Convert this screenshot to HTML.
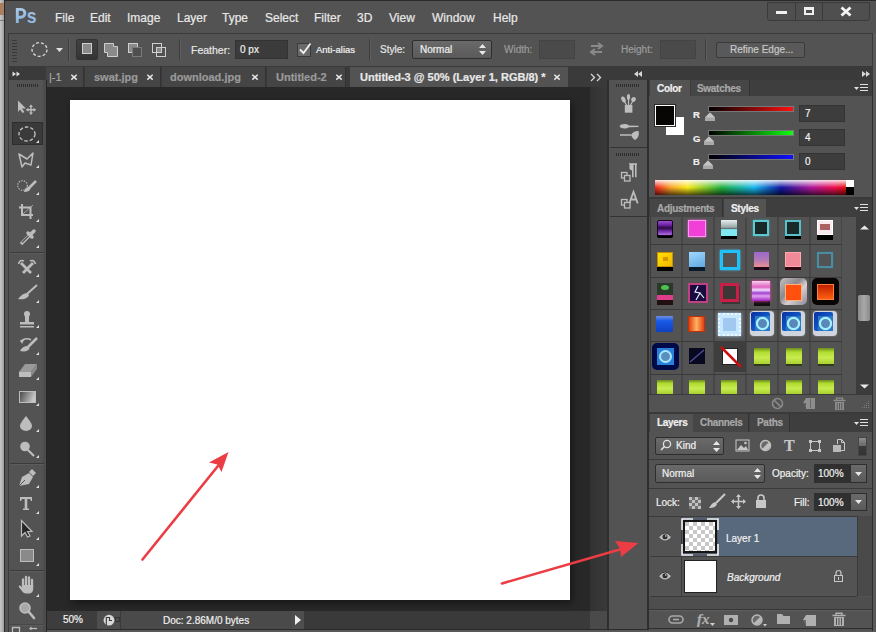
<!DOCTYPE html>
<html><head><meta charset="utf-8">
<style>
*{margin:0;padding:0;box-sizing:border-box}
html,body{width:876px;height:632px;overflow:hidden;background:#535353}
body{position:relative;font-family:"Liberation Sans",sans-serif;color:#e8e8e8}
.a{position:absolute}
.t{position:absolute;white-space:nowrap;line-height:1;-webkit-text-stroke:0.2px currentColor}
</style></head><body>
<!-- left light strip -->
<div class="a" style="left:0;top:0;width:4px;height:632px;background:linear-gradient(90deg,#c8c8c8,#a0a0a0)"></div><div class="a" style="left:0;top:3px;width:4px;height:12px;background:#a88060"></div><div class="a" style="left:0;top:20px;width:4px;height:1px;background:#7a7a7a"></div>
<div class="a" style="left:4px;top:0;width:872px;height:632px;background:#535353;border-left:1px solid #2a2a2a;border-top:1px solid #2a2a2a"></div>

<!-- MENU BAR -->
<svg class="a" style="left:0;top:0" width="44" height="30"><defs><linearGradient id="psg" x1="0" y1="0" x2="0" y2="1"><stop offset="0" stop-color="#a8c8e8"/><stop offset="1" stop-color="#8ab2dc"/></linearGradient></defs>
<path d="M17.3 23V9.4H21A3.9 3.9 0 0 1 21 17.2H17.3" fill="none" stroke="url(#psg)" stroke-width="2.9"/>
<text x="0" y="0" transform="translate(26.8 23) scale(0.88 1.04)" font-family="Liberation Sans" font-weight="bold" font-size="20" fill="url(#psg)">s</text></svg>
<div class="t menu" style="left:55px;top:12px;font-size:12px">File</div>
<div class="t menu" style="left:90px;top:12px;font-size:12px">Edit</div>
<div class="t menu" style="left:127px;top:12px;font-size:12px">Image</div>
<div class="t menu" style="left:177px;top:12px;font-size:12px">Layer</div>
<div class="t menu" style="left:222px;top:12px;font-size:12px">Type</div>
<div class="t menu" style="left:265px;top:12px;font-size:12px">Select</div>
<div class="t menu" style="left:314px;top:12px;font-size:12px">Filter</div>
<div class="t menu" style="left:357px;top:12px;font-size:12px">3D</div>
<div class="t menu" style="left:389px;top:12px;font-size:12px">View</div>
<div class="t menu" style="left:432px;top:12px;font-size:12px">Window</div>
<div class="t menu" style="left:493px;top:12px;font-size:12px">Help</div>

<!-- window controls -->
<div class="a" style="left:767px;top:2px;width:103px;height:19px;background:#4f4f4f;border:1px solid #3a3a3a;border-radius:0 0 3px 3px"></div>
<div class="a" style="left:795px;top:2px;width:1px;height:19px;background:#3a3a3a"></div>
<div class="a" style="left:822px;top:2px;width:1px;height:19px;background:#3a3a3a"></div>
<div class="a" style="left:776px;top:11px;width:11px;height:3px;background:#f0f0f0"></div>
<div class="a" style="left:804px;top:7px;width:10px;height:8px;border:2px solid #f0f0f0;border-top-width:3px"></div>
<svg class="a" style="left:839px;top:6px" width="14" height="11"><path d="M2.5 1.5L11.5 9.5M11.5 1.5L2.5 9.5" stroke="#f4f4f4" stroke-width="2.9"/></svg>

<!-- OPTIONS BAR -->
<div class="a" style="left:8px;top:33px;width:865px;height:34px;background:#535353;border:1px solid #3a3a3a"></div>

<!-- options bar content -->
<div class="a" style="left:12px;top:40px;width:5px;height:22px;background:repeating-linear-gradient(#383838 0 1px,transparent 1px 3px)"></div>
<svg class="a" style="left:30px;top:41px" width="19" height="17"><ellipse cx="9.5" cy="8.5" rx="7.5" ry="6.8" fill="none" stroke="#d8d8d8" stroke-width="1.3" stroke-dasharray="3 2"/></svg>
<svg class="a" style="left:56px;top:48px" width="7" height="5"><path d="M0 0H7L3.5 4Z" fill="#e0e0e0"/></svg>
<div class="a" style="left:68px;top:39px;width:1px;height:22px;background:#3e3e3e"></div>
<div class="a" style="left:69px;top:39px;width:1px;height:22px;background:#5e5e5e"></div>
<div class="a" style="left:76px;top:39px;width:22px;height:21px;background:linear-gradient(#404040,#3a3a3a 70%,#333);border:1px solid #333;border-radius:2px"></div>
<div class="a" style="left:82px;top:43px;width:10px;height:11px;border:1px solid #cfcfcf;background:#8a8a8a"></div>
<svg class="a" style="left:102px;top:41px" width="18" height="17"><path d="M2.5 2.5H11.5V5.5H15.5V15.5H5.5V11.5H2.5Z" fill="#8a8a8a" stroke="#cfcfcf"/></svg>
<svg class="a" style="left:126px;top:41px" width="18" height="17"><rect x="2.5" y="2.5" width="9" height="9" fill="#8a8a8a" stroke="#cfcfcf"/><rect x="6.5" y="6.5" width="9" height="9" fill="#4f4f4f" stroke="#7a7a7a"/></svg>
<svg class="a" style="left:150px;top:41px" width="18" height="17"><rect x="2.5" y="2.5" width="9" height="9" fill="none" stroke="#cfcfcf"/><rect x="6.5" y="6.5" width="9" height="9" fill="none" stroke="#cfcfcf"/><rect x="7" y="7" width="4" height="4" fill="#8a8a8a"/></svg>
<div class="a" style="left:179px;top:39px;width:1px;height:22px;background:#3e3e3e"></div>
<div class="a" style="left:180px;top:39px;width:1px;height:22px;background:#5e5e5e"></div>
<div class="t" style="left:191px;top:45px;font-size:10.5px;color:#e6e6e6">Feather:</div>
<div class="a" style="left:235px;top:40px;width:53px;height:19px;background:#3b3b3b;border:1px solid #333"></div>
<div class="t" style="left:240px;top:45px;font-size:10px;color:#f0f0f0">0 px</div>
<div class="a" style="left:297px;top:43px;width:14px;height:14px;background:#6a6a6a;border:1px solid #3a3a3a"></div>
<svg class="a" style="left:297px;top:40px" width="16" height="16"><path d="M3 9.5L6.5 13L13.5 3.5" fill="none" stroke="#f0f0f0" stroke-width="1.8"/></svg>
<div class="t" style="left:316px;top:45px;font-size:9.5px;color:#f0f0f0">Anti-alias</div>
<div class="a" style="left:369px;top:39px;width:1px;height:22px;background:#3e3e3e"></div>
<div class="a" style="left:370px;top:39px;width:1px;height:22px;background:#5e5e5e"></div>
<div class="t" style="left:380px;top:45px;font-size:10px;color:#e6e6e6">Style:</div>
<div class="a" style="left:412px;top:40px;width:80px;height:19px;background:linear-gradient(#6a6a6a,#5a5a5a);border:1px solid #2e2e2e;border-radius:2px"></div>
<div class="t" style="left:420px;top:45px;font-size:10px;color:#f0f0f0">Normal</div>
<svg class="a" style="left:478px;top:43px" width="9" height="13"><path d="M1 5L4.5 1L8 5ZM1 8L4.5 12L8 8Z" fill="#e8e8e8"/></svg>
<div class="t" style="left:504px;top:45px;font-size:10px;color:#9c9c9c">Width:</div>
<div class="a" style="left:539px;top:40px;width:36px;height:19px;background:#4a4a4a;border:1px solid #444"></div>
<svg class="a" style="left:588px;top:41px" width="17" height="16"><path d="M3 5H13M10 2L14 5L10 8M14 11H4M7 8L3 11L7 14" fill="none" stroke="#8a8a8a" stroke-width="2"/></svg>
<div class="t" style="left:621px;top:45px;font-size:10px;color:#9c9c9c">Height:</div>
<div class="a" style="left:660px;top:40px;width:36px;height:19px;background:#4a4a4a;border:1px solid #444"></div>
<div class="a" style="left:705px;top:39px;width:1px;height:22px;background:#3e3e3e"></div>
<div class="a" style="left:706px;top:39px;width:1px;height:22px;background:#5e5e5e"></div>
<div class="a" style="left:716px;top:42px;width:89px;height:16px;background:#595959;border:1px solid #3a3a3a;border-radius:2px"></div>
<div class="t" style="left:730px;top:45px;font-size:10px;color:#c8c8c8">Refine Edge...</div>

<!-- TAB ROW / DOC AREA -->
<div class="a" style="left:46px;top:67px;width:562px;height:20px;background:#3a3a3a"></div>
<div class="a" style="left:46px;top:87px;width:544px;height:524px;background:#282828"></div>
<div class="a" style="left:590px;top:87px;width:18px;height:524px;background:linear-gradient(90deg,#323232,#3a3a3a)"></div>
<!-- tabs -->
<div class="a" style="left:46px;top:67px;width:38px;height:20px;background:#454545;border-right:1px solid #333"></div>
<div class="t" style="left:49px;top:72px;font-size:11px;color:#a8a8a8">|-1</div>
<svg class="a" style="left:69.5px;top:73px" width="8" height="8"><path d="M1.3 1.8L6.7 6.6M6.7 1.8L1.3 6.6" stroke="#e8e8e8" stroke-width="1.5"/></svg>
<div class="a" style="left:85px;top:67px;width:76px;height:20px;background:#454545;border-right:1px solid #333"></div>
<div class="t" style="left:94px;top:72px;font-size:11px;font-weight:bold;color:#9a9a9a">swat.jpg</div>
<svg class="a" style="left:146px;top:73px" width="8" height="8"><path d="M1.3 1.8L6.7 6.6M6.7 1.8L1.3 6.6" stroke="#e8e8e8" stroke-width="1.5"/></svg>
<div class="a" style="left:162px;top:67px;width:104px;height:20px;background:#454545;border-right:1px solid #333"></div>
<div class="t" style="left:170px;top:72px;font-size:11px;font-weight:bold;color:#9a9a9a">download.jpg</div>
<svg class="a" style="left:251px;top:73px" width="8" height="8"><path d="M1.3 1.8L6.7 6.6M6.7 1.8L1.3 6.6" stroke="#e8e8e8" stroke-width="1.5"/></svg>
<div class="a" style="left:267px;top:67px;width:79px;height:20px;background:#454545;border-right:1px solid #333"></div>
<div class="t" style="left:276px;top:72px;font-size:11px;font-weight:bold;color:#9a9a9a">Untitled-2</div>
<svg class="a" style="left:334.5px;top:73px" width="8" height="8"><path d="M1.3 1.8L6.7 6.6M6.7 1.8L1.3 6.6" stroke="#e8e8e8" stroke-width="1.5"/></svg>
<div class="a" style="left:350px;top:67px;width:218px;height:20px;background:#535353"></div>
<div class="t" style="left:360px;top:72px;font-size:11px;font-weight:bold;color:#e8e8e8">Untitled-3 @ 50% (Layer 1, RGB/8) *</div>
<svg class="a" style="left:552.5px;top:73px" width="8" height="8"><path d="M1.3 1.8L6.7 6.6M6.7 1.8L1.3 6.6" stroke="#e8e8e8" stroke-width="1.5"/></svg>
<svg class="a" style="left:590px;top:73px" width="14" height="9"><path d="M1 1L4.5 4.5L1 8M7 1L10.5 4.5L7 8" fill="none" stroke="#d8d8d8" stroke-width="1.3"/></svg>

<!-- canvas -->
<div class="a" style="left:70px;top:100px;width:500px;height:500px;background:#fff;box-shadow:2px 3px 8px rgba(0,0,0,.45)"></div>

<!-- status bar -->
<div class="a" style="left:46px;top:611px;width:562px;height:18px;background:#3a3a3a"></div>
<div class="a" style="left:46px;top:611px;width:51px;height:18px;background:#3d3d3d"></div>
<div class="t" style="left:63px;top:615px;font-size:10px;color:#f0f0f0">50%</div>
<div class="a" style="left:97px;top:611px;width:24px;height:18px;background:#4e4e4e;border-right:1px solid #3a3a3a"></div>
<svg class="a" style="left:100px;top:612px" width="22" height="16"><circle cx="9" cy="8.2" r="5.4" fill="#d8d8d8"/><path d="M6.3 13V5.5H9.5V8.5H12" fill="none" stroke="#3a3a3a" stroke-width="1.1"/><rect x="15.5" y="5.5" width="4" height="4" fill="none" stroke="#2e2e2e" stroke-width="0.8"/></svg>
<div class="a" style="left:121px;top:611px;width:171px;height:18px;background:#4a4a4a"></div>
<div class="t" style="left:163px;top:616px;font-size:10px;color:#f0f0f0">Doc: 2.86M/0 bytes</div>
<div class="a" style="left:292px;top:611px;width:12px;height:18px;background:#4e4e4e"></div><div class="a" style="left:590px;top:611px;width:17px;height:18px;background:#4a4a4a"></div>
<svg class="a" style="left:294px;top:615px" width="8" height="10"><path d="M1 0V10L7 5Z" fill="#f0f0f0"/></svg>
<div class="a" style="left:47px;top:629px;width:829px;height:1px;background:#2a2a2a"></div>
<div class="a" style="left:47px;top:630px;width:829px;height:2px;background:#585858"></div>

<!-- TOOLBAR -->
<div class="a" style="left:8px;top:67px;width:38px;height:13px;background:#3a3a3a"></div>
<svg class="a" style="left:12px;top:71px" width="10" height="6"><path d="M0.5 0.5L4 3L0.5 5.5ZM4.5 0.5L8 3L4.5 5.5Z" fill="#e0e0e0"/></svg>
<div class="a" style="left:8px;top:80px;width:39px;height:552px;background:#535353;border-left:1px solid #3a3a3a;border-right:1px solid #262626;box-shadow:inset -3px 0 0 #4c4c4c"></div>
<div class="a" style="left:17px;top:84px;width:22px;height:3px;background:repeating-linear-gradient(90deg,#2e2e2e 0 1px,transparent 1px 2px)"></div>

<!-- DOCK ICON COLUMN -->
<div class="a" style="left:608px;top:67px;width:265px;height:13px;background:#3a3a3a"></div>
<svg class="a" style="left:634px;top:71px" width="8" height="6"><path d="M4 0V6L0 3ZM8 0V6L4 3Z" fill="#d8d8d8"/></svg>
<svg class="a" style="left:862px;top:71px" width="8" height="6"><path d="M0 0V6L4 3ZM4 0V6L8 3Z" fill="#d8d8d8"/></svg>
<div class="a" style="left:607px;top:80px;width:42px;height:549px;background:#535353;border-left:2px solid #2e2e2e;border-right:2px solid #2e2e2e"></div>
<div class="a" style="left:610px;top:80px;width:37px;height:68px;background:#535353;border-bottom:1px solid #333"></div>
<div class="a" style="left:610px;top:149px;width:37px;height:68px;background:#535353;border-bottom:1px solid #333"></div>
<div class="a" style="left:616px;top:84px;width:24px;height:3px;background:repeating-linear-gradient(90deg,#2e2e2e 0 1px,transparent 1px 2px)"></div>
<div class="a" style="left:616px;top:153px;width:24px;height:3px;background:repeating-linear-gradient(90deg,#2e2e2e 0 1px,transparent 1px 2px)"></div>

<!-- RIGHT PANELS BG -->
<div class="a" style="left:649px;top:80px;width:224px;height:551px;background:#535353;border-right:1px solid #2e2e2e"></div>
<div class="a" style="left:873px;top:33px;width:3px;height:599px;background:#5a5a5a"></div>

<!-- COLOR PANEL -->
<div class="a" style="left:649px;top:80px;width:223px;height:16px;background:#3e3e3e"></div>
<div class="a" style="left:650px;top:80px;width:40px;height:17px;background:#535353"></div>
<div class="t" style="left:657px;top:84px;font-size:10px;color:#f0f0f0;font-weight:bold;letter-spacing:-0.3px">Color</div>
<div class="a" style="left:691px;top:80px;width:59px;height:16px;background:#464646;border-right:1px solid #333"></div>
<div class="t" style="left:697px;top:84px;font-size:10px;color:#a8a8a8;font-weight:bold;letter-spacing:-0.3px">Swatches</div>
<svg class="a" style="left:854px;top:84px" width="15" height="9"><path d="M0 3H5L2.5 6Z" fill="#e0e0e0"/><path d="M6 0.5H14M6 3.5H14M6 6.5H14" stroke="#e0e0e0" stroke-width="1"/></svg>
<div class="a" style="left:666px;top:117px;width:18px;height:18px;background:#fff"></div>
<div class="a" style="left:655px;top:105px;width:20px;height:21px;background:#080604;border:1px solid #fff;outline:1px solid #2a2a2a"></div>
<div class="t" style="left:693px;top:110px;font-size:9.5px;font-weight:bold;color:#f0f0f0">R</div>
<div class="t" style="left:693px;top:134px;font-size:9.5px;font-weight:bold;color:#f0f0f0">G</div>
<div class="t" style="left:693px;top:157px;font-size:9.5px;font-weight:bold;color:#f0f0f0">B</div>
<div class="a" style="left:708px;top:106px;width:86px;height:6px;background:linear-gradient(90deg,#000,#ff1010);border:1px solid #777"></div>
<div class="a" style="left:708px;top:130px;width:86px;height:6px;background:linear-gradient(90deg,#000,#10ff10);border:1px solid #777"></div>
<div class="a" style="left:708px;top:154px;width:86px;height:6px;background:linear-gradient(90deg,#000,#1010ff);border:1px solid #777"></div>
<svg class="a" style="left:704px;top:112px" width="12" height="10"><path d="M6 0.5L11 5.5V9H1V5.5Z" fill="#a8a8a8"/><path d="M6 0.5L11 5.5H1Z" fill="#c4c4c4"/></svg>
<svg class="a" style="left:703px;top:136px" width="12" height="10"><path d="M6 0.5L11 5.5V9H1V5.5Z" fill="#a8a8a8"/><path d="M6 0.5L11 5.5H1Z" fill="#c4c4c4"/></svg>
<svg class="a" style="left:702px;top:160px" width="12" height="10"><path d="M6 0.5L11 5.5V9H1V5.5Z" fill="#a8a8a8"/><path d="M6 0.5L11 5.5H1Z" fill="#c4c4c4"/></svg>
<div class="a" style="left:799px;top:105px;width:46px;height:17px;background:#3d3d3d;border:1px solid #333"></div>
<div class="a" style="left:799px;top:129px;width:46px;height:17px;background:#3d3d3d;border:1px solid #333"></div>
<div class="a" style="left:799px;top:153px;width:46px;height:17px;background:#3d3d3d;border:1px solid #333"></div>
<div class="t" style="left:805px;top:109px;font-size:10px;color:#f0f0f0">7</div>
<div class="t" style="left:805px;top:133px;font-size:10px;color:#f0f0f0">4</div>
<div class="t" style="left:805px;top:157px;font-size:10px;color:#f0f0f0">0</div>
<div class="a" style="left:655px;top:180px;width:191px;height:15px;background:linear-gradient(90deg,#f02020 0%,#f8a028 8%,#f8e818 17%,#20b040 35%,#18b8f0 52%,#1018a0 66%,#b01898 82%,#f01050 94%,#e01010 100%)"></div>
<div class="a" style="left:655px;top:180px;width:191px;height:15px;background:linear-gradient(#ffffffe0 0%,#fff0 50%),linear-gradient(#0000 0%,#0000 50%,#000a 100%)"></div>
<div class="a" style="left:846px;top:180px;width:8px;height:7px;background:#fff"></div>
<div class="a" style="left:846px;top:187px;width:8px;height:8px;background:#000"></div>
<div class="a" style="left:649px;top:197px;width:223px;height:2px;background:#3a3a3a"></div>

<!-- STYLES PANEL -->
<div class="a" style="left:649px;top:199px;width:223px;height:18px;background:#3e3e3e"></div>
<div class="a" style="left:650px;top:199px;width:73px;height:18px;background:#464646;border-right:1px solid #333"></div>
<div class="t" style="left:657px;top:204px;font-size:10px;color:#a8a8a8;font-weight:bold;letter-spacing:-0.3px">Adjustments</div>
<div class="a" style="left:724px;top:199px;width:42px;height:18px;background:#535353"></div>
<div class="t" style="left:731px;top:204px;font-size:10px;color:#f0f0f0;font-weight:bold;letter-spacing:-0.3px">Styles</div>
<svg class="a" style="left:854px;top:204px" width="15" height="9"><path d="M0 3H5L2.5 6Z" fill="#e0e0e0"/><path d="M6 0.5H14M6 3.5H14M6 6.5H14" stroke="#e0e0e0" stroke-width="1"/></svg>
<div class="a" style="left:650px;top:217px;width:192px;height:177px;overflow:hidden"><svg class="a" style="left:0;top:0" width="192" height="177"><rect x="0" y="0" width="1" height="177" fill="#3a3a3a"/><rect x="31.5" y="0" width="1" height="177" fill="#3a3a3a"/><rect x="63.5" y="0" width="1" height="177" fill="#3a3a3a"/><rect x="95.5" y="0" width="1" height="177" fill="#3a3a3a"/><rect x="127.5" y="0" width="1" height="177" fill="#3a3a3a"/><rect x="159.5" y="0" width="1" height="177" fill="#3a3a3a"/><rect x="191.5" y="0" width="1" height="177" fill="#3a3a3a"/><rect x="0" y="27" width="192" height="1" fill="#3a3a3a"/><rect x="0" y="60" width="192" height="1" fill="#3a3a3a"/><rect x="0" y="92" width="192" height="1" fill="#3a3a3a"/><rect x="0" y="124" width="192" height="1" fill="#3a3a3a"/><rect x="0" y="157" width="192" height="1" fill="#3a3a3a"/></svg></div>
<!--STYLEICONS-->
<div class="a" style="left:657px;top:221px;width:16px;height:17px;background:#000;border-radius:2px"></div>
<div class="a" style="left:657px;top:220px;width:16px;height:16px;background:linear-gradient(#9a50d0,#6a20a0 30%,#2a0a40 50%,#7a30b0 75%,#b070e0);border:1px solid #1a0520;border-radius:2px"></div>
<div class="a" style="left:688px;top:220px;width:18px;height:17px;background:#f040d8;border:1px solid #ff9af0;box-shadow:0 0 2px #ff60e0"></div>
<div class="a" style="left:721px;top:222px;width:16px;height:17px;background:#000"></div>
<div class="a" style="left:721px;top:220px;width:16px;height:16px;background:linear-gradient(#e8f0f0,#9aa8a8 45%,#606868 55%,#80e8f0 60%,#80e8f0)"></div>
<div class="a" style="left:753px;top:220px;width:16px;height:16px;background:#1a2828;border:2px solid #60c8d0;box-shadow:0 0 2px #40a0a8"></div>
<div class="a" style="left:785px;top:222px;width:16px;height:17px;background:#000"></div>
<div class="a" style="left:785px;top:220px;width:16px;height:16px;background:#1a2a2a;border:2px solid #58c0c8"></div>
<div class="a" style="left:817px;top:223px;width:16px;height:17px;background:#000"></div>
<div class="a" style="left:817px;top:220px;width:16px;height:15px;background:#f8e8f0;border:1px solid #fff"></div>
<div class="a" style="left:820px;top:224px;width:10px;height:6px;background:#a86060"></div>
<div class="a" style="left:657px;top:254px;width:16px;height:17px;background:#000"></div>
<div class="a" style="left:657px;top:252px;width:16px;height:15px;background:linear-gradient(135deg,#ffe000,#f0b800);border:1px solid #c89000"></div>
<div class="a" style="left:663px;top:257px;width:5px;height:4px;background:#c07000;opacity:.6"></div>
<div class="a" style="left:689px;top:254px;width:16px;height:17px;background:#0a1a2a"></div>
<div class="a" style="left:689px;top:252px;width:16px;height:15px;background:linear-gradient(160deg,#a0d8ff,#60a8e0)"></div>
<div class="a" style="left:720px;top:250px;width:20px;height:20px;border:3px solid #20c0f8;box-shadow:0 0 2px #40d0ff"></div>
<div class="a" style="left:754px;top:254px;width:15px;height:16px;background:#200818"></div>
<div class="a" style="left:754px;top:252px;width:15px;height:15px;background:linear-gradient(#9a68d0,#b078b8 50%,#e89090)"></div>
<div class="a" style="left:785px;top:254px;width:16px;height:16px;background:#300a10"></div>
<div class="a" style="left:785px;top:252px;width:16px;height:15px;background:#f08a98;border:1px solid #ffa8b0"></div>
<div class="a" style="left:817px;top:252px;width:16px;height:16px;border:2px solid #4a8ca0;box-shadow:0 0 2px #3a6a80"></div>
<div class="a" style="left:657px;top:283px;width:16px;height:22px;background:linear-gradient(#2a3a2a,#2a3a2a 55%,#e03c8c 55%,#e03c8c 78%,#201010 78%)"></div>
<div class="a" style="left:661px;top:285px;width:8px;height:5px;background:#50c050;border-radius:50%"></div>
<div class="a" style="left:688px;top:283px;width:20px;height:20px;background:#1a0a40;border:2px solid #c04080"></div>
<svg class="a" style="left:690px;top:285px" width="16" height="16"><path d="M8 1L5 7L10 8L6 15M10 8L14 13" fill="none" stroke="#e0f0ff" stroke-width="1.2"/></svg>
<div class="a" style="left:722px;top:286px;width:18px;height:18px;background:#2a1a1a;opacity:.5"></div>
<div class="a" style="left:720px;top:283px;width:19px;height:19px;border:3px solid #c81e48"></div>
<div class="a" style="left:754px;top:300px;width:16px;height:6px;background:#101010"></div>
<div class="a" style="left:752px;top:281px;width:18px;height:20px;background:linear-gradient(#f8d0f0,#e060c0 30%,#f0e0ff 45%,#a040d0 60%,#e0a0f0 75%,#a020c0);box-shadow:0 0 3px #ff40b0"></div>
<div class="a" style="left:780px;top:278px;width:27px;height:27px;background:linear-gradient(135deg,#c8c0c0,#8a8890 40%,#d8d0d0 60%,#8a8898);border-radius:5px"></div>
<div class="a" style="left:785px;top:284px;width:17px;height:17px;background:#ff5010;border:1px solid #ffb080"></div>
<div class="a" style="left:812px;top:278px;width:27px;height:27px;background:#0a0505;border-radius:5px"></div>
<div class="a" style="left:817px;top:284px;width:17px;height:16px;background:linear-gradient(#c02000,#ff6010);border:1px solid #ff8040"></div>
<div class="a" style="left:656px;top:316px;width:17px;height:16px;background:linear-gradient(#7090e0,#1a5ae8 30%,#1040c0);border-radius:1px"></div>
<div class="a" style="left:688px;top:316px;width:17px;height:16px;background:linear-gradient(90deg,#e04010,#ffb060 50%,#e04010);border:1px solid #c03010"></div>
<div class="a" style="left:718px;top:313px;width:23px;height:23px;background:#c8e8ff;border:2px dotted #f0f8ff;box-shadow:0 0 3px #b0d8ff"></div>
<div class="a" style="left:723px;top:318px;width:13px;height:13px;background:#a0c8f0"></div>
<div class="a" style="left:750px;top:311px;width:24px;height:25px;background:#d0d4dc;border-radius:4px;box-shadow:0 0 2px #a0a0a0"></div>
<div class="a" style="left:751px;top:312px;width:19px;height:19px;background:linear-gradient(135deg,#0830a0 0%,#1050c0 45%,#2a80d0 100%);border-radius:2px"></div>
<svg class="a" style="left:752px;top:313px" width="20" height="20"><rect x="3" y="3" width="15" height="15" fill="#2a78c8"/><circle cx="10.5" cy="10.5" r="5.6" fill="#5888b8" stroke="#a8f0ff" stroke-width="2.2"/></svg>
<div class="a" style="left:781px;top:311px;width:24px;height:25px;background:#d0d4dc;border-radius:4px;box-shadow:0 0 2px #a0a0a0"></div>
<div class="a" style="left:782px;top:312px;width:19px;height:19px;background:linear-gradient(135deg,#0830a0 0%,#1050c0 45%,#2a80d0 100%);border-radius:2px"></div>
<svg class="a" style="left:783px;top:313px" width="20" height="20"><rect x="3" y="3" width="15" height="15" fill="#2a78c8"/><circle cx="10.5" cy="10.5" r="5.6" fill="#5888b8" stroke="#a8f0ff" stroke-width="2.2"/></svg>
<div class="a" style="left:813px;top:311px;width:24px;height:25px;background:#d0d4dc;border-radius:4px;box-shadow:0 0 2px #a0a0a0"></div>
<div class="a" style="left:814px;top:312px;width:19px;height:19px;background:linear-gradient(135deg,#0830a0 0%,#1050c0 45%,#2a80d0 100%);border-radius:2px"></div>
<svg class="a" style="left:815px;top:313px" width="20" height="20"><rect x="3" y="3" width="15" height="15" fill="#2a78c8"/><circle cx="10.5" cy="10.5" r="5.6" fill="#5888b8" stroke="#a8f0ff" stroke-width="2.2"/></svg>
<div class="a" style="left:652px;top:343px;width:27px;height:27px;background:#000a48;border-radius:5px"></div>
<svg class="a" style="left:657px;top:348px" width="17" height="17"><rect x="0" y="0" width="17" height="17" fill="#2a80d8"/><circle cx="8.5" cy="8.5" r="5.5" fill="#5a90c0" stroke="#a8e8ff" stroke-width="2"/></svg>
<div class="a" style="left:689px;top:348px;width:16px;height:16px;background:#080820"></div>
<svg class="a" style="left:689px;top:348px" width="16" height="16"><path d="M1 14L15 2" stroke="#5050a0" stroke-width="1.2"/></svg>
<div class="a" style="left:714px;top:341px;width:32px;height:31px;background:#3e3e3e"></div>
<div class="a" style="left:722px;top:348px;width:16px;height:17px;background:#fff;border:1px solid #222"></div>
<svg class="a" style="left:719px;top:345px" width="24" height="24"><path d="M2 2L22 22" stroke="#c81010" stroke-width="2.5"/></svg>
<div class="a" style="left:754px;top:350px;width:16px;height:16px;background:#303a18"></div>
<div class="a" style="left:754px;top:348px;width:16px;height:16px;background:linear-gradient(#6a8a20,#b0dc30 25%,#c8ec50 60%,#a8d030)"></div>
<div class="a" style="left:786px;top:350px;width:16px;height:16px;background:#303a18"></div>
<div class="a" style="left:786px;top:348px;width:16px;height:16px;background:linear-gradient(#6a8a20,#b0dc30 25%,#c8ec50 60%,#a8d030)"></div>
<div class="a" style="left:818px;top:350px;width:16px;height:16px;background:#303a18"></div>
<div class="a" style="left:818px;top:348px;width:16px;height:16px;background:linear-gradient(#6a8a20,#b0dc30 25%,#c8ec50 60%,#a8d030)"></div>
<div class="a" style="left:657px;top:380px;width:16px;height:14px;background:linear-gradient(#6a8a20,#b0dc30 25%,#c8ec50 60%,#a8d030)"></div>
<div class="a" style="left:689px;top:380px;width:16px;height:14px;background:linear-gradient(#6a8a20,#b0dc30 25%,#c8ec50 60%,#a8d030)"></div>
<div class="a" style="left:721px;top:380px;width:16px;height:14px;background:linear-gradient(#6a8a20,#b0dc30 25%,#c8ec50 60%,#a8d030)"></div>
<div class="a" style="left:754px;top:380px;width:16px;height:14px;background:linear-gradient(#6a8a20,#b0dc30 25%,#c8ec50 60%,#a8d030)"></div>
<div class="a" style="left:786px;top:380px;width:16px;height:14px;background:linear-gradient(#6a8a20,#b0dc30 25%,#c8ec50 60%,#a8d030)"></div>
<div class="a" style="left:818px;top:380px;width:16px;height:14px;background:linear-gradient(#6a8a20,#b0dc30 25%,#c8ec50 60%,#a8d030)"></div>
<!--/STYLEICONS-->
<div class="a" style="left:856px;top:217px;width:16px;height:177px;background:#3c3c3c"></div>
<svg class="a" style="left:860px;top:225px" width="10" height="5"><path d="M4.5 0.5L9 4.5H0Z" fill="#e8e8e8"/></svg>
<svg class="a" style="left:860px;top:384px" width="10" height="5"><path d="M4.5 4.5L9 0.5H0Z" fill="#e8e8e8"/></svg>
<div class="a" style="left:858px;top:295px;width:12px;height:26px;background:linear-gradient(90deg,#8a8a8a,#a8a8a8,#8a8a8a);border-radius:2px"></div>
<div class="a" style="left:649px;top:394px;width:223px;height:18px;background:#535353;border-top:1px solid #3a3a3a"></div>
<svg class="a" style="left:771px;top:397px" width="13" height="13"><circle cx="6.5" cy="6.5" r="5" fill="none" stroke="#8a8a8a" stroke-width="1.6"/><path d="M3 3L10 10" stroke="#8a8a8a" stroke-width="1.6"/></svg>
<svg class="a" style="left:802px;top:397px" width="14" height="13"><path d="M4 1H13V12H4V6H1Z" fill="#8e8e8e"/><path d="M1 6H4V12Z" fill="#5e5e5e"/><path d="M8.5 2V11" stroke="#6a6a6a"/></svg>
<svg class="a" style="left:832px;top:397px" width="15" height="14"><path d="M1.5 3.5H13.5M4.5 3V1.2H10.5V3" fill="none" stroke="#8e8e8e" stroke-width="1.3"/><path d="M3 5H12V13H3Z" fill="#8e8e8e"/><path d="M5.2 6V12.5M7.5 6V12.5M9.8 6V12.5" stroke="#535353" stroke-width="0.9"/></svg><svg class="a" style="left:860px;top:400px" width="10" height="10"><path d="M8 1.5h1M6 3.5h1M8 3.5h1M4 5.5h1M6 5.5h1M8 5.5h1M2 7.5h1M4 7.5h1M6 7.5h1M8 7.5h1" stroke="#7a7a7a"/></svg>
<div class="a" style="left:649px;top:412px;width:223px;height:2px;background:#3a3a3a"></div>

<!-- LAYERS PANEL -->
<div class="a" style="left:649px;top:414px;width:223px;height:18px;background:#3e3e3e"></div>
<div class="a" style="left:650px;top:414px;width:43px;height:18px;background:#535353"></div>
<div class="t" style="left:657px;top:418px;font-size:10px;color:#f0f0f0;font-weight:bold;letter-spacing:-0.3px">Layers</div>
<div class="a" style="left:693px;top:414px;width:56px;height:18px;background:#464646;border-right:1px solid #333"></div>
<div class="t" style="left:700px;top:418px;font-size:10px;color:#a8a8a8;font-weight:bold;letter-spacing:-0.3px">Channels</div>
<div class="a" style="left:750px;top:414px;width:40px;height:18px;background:#464646;border-right:1px solid #333"></div>
<div class="t" style="left:757px;top:418px;font-size:10px;color:#a8a8a8;font-weight:bold;letter-spacing:-0.3px">Paths</div>
<svg class="a" style="left:854px;top:419px" width="15" height="9"><path d="M0 3H5L2.5 6Z" fill="#e0e0e0"/><path d="M6 0.5H14M6 3.5H14M6 6.5H14" stroke="#e0e0e0" stroke-width="1"/></svg>

<div class="a" style="left:655px;top:437px;width:69px;height:18px;background:linear-gradient(#6a6a6a,#5a5a5a);border:1px solid #2e2e2e;border-radius:2px"></div>
<svg class="a" style="left:660px;top:439px" width="12" height="13"><circle cx="7" cy="5" r="3.6" fill="none" stroke="#e0e0e0" stroke-width="1.3"/><path d="M4.5 7.5L1 11" stroke="#e0e0e0" stroke-width="1.6"/></svg>
<div class="t" style="left:676px;top:441px;font-size:10px;color:#f0f0f0">Kind</div>
<svg class="a" style="left:712px;top:440px" width="9" height="13"><path d="M1 5L4.5 1L8 5ZM1 8L4.5 12L8 8Z" fill="#e8e8e8"/></svg>
<svg class="a" style="left:735px;top:439px" width="15" height="13"><rect x="1" y="1" width="13" height="11" fill="none" stroke="#c8c8c8"/><path d="M2 11L6 6L9 9L11 7L13 11Z" fill="#c8c8c8"/><circle cx="10.5" cy="4" r="1.3" fill="#c8c8c8"/></svg>
<svg class="a" style="left:759px;top:439px" width="13" height="13"><circle cx="6.5" cy="6.5" r="5" fill="#6a6a6a" stroke="#c0c0c0" stroke-width="1.5"/><path d="M3 10L10 3A5 5 0 0 1 3 10Z" fill="#c0c0c0"/></svg>
<div class="t" style="left:784px;top:438px;font-size:16px;font-weight:bold;font-family:'Liberation Serif',serif;color:#c8c8c8">T</div>
<svg class="a" style="left:808px;top:439px" width="14" height="14"><rect x="2.5" y="2.5" width="9" height="9" fill="none" stroke="#c8c8c8"/><rect x="1" y="1" width="3" height="3" fill="#c8c8c8"/><rect x="10" y="1" width="3" height="3" fill="#c8c8c8"/><rect x="1" y="10" width="3" height="3" fill="#c8c8c8"/><rect x="10" y="10" width="3" height="3" fill="#c8c8c8"/></svg>
<svg class="a" style="left:832px;top:438px" width="14" height="15"><path d="M5.5 6V1.5H9.5L12.5 4.5V12.5H9" fill="none" stroke="#c8c8c8"/><path d="M9.5 1.5V4.5H12.5" fill="none" stroke="#c8c8c8"/><rect x="1" y="7" width="8" height="7" fill="#b8b8b8"/></svg>
<div class="a" style="left:858px;top:437px;width:9px;height:19px;background:linear-gradient(#8e8e8e 0,#6a6a6a 45%,#3a3a3a 50%,#333 100%);border:1px solid #444"></div>
<div class="a" style="left:649px;top:459px;width:223px;height:1px;background:#3a3a3a"></div>

<div class="a" style="left:655px;top:464px;width:110px;height:19px;background:linear-gradient(#6a6a6a,#5a5a5a);border:1px solid #2e2e2e;border-radius:2px"></div>
<div class="t" style="left:662px;top:469px;font-size:10px;color:#f0f0f0">Normal</div>
<svg class="a" style="left:753px;top:467px" width="9" height="13"><path d="M1 5L4.5 1L8 5ZM1 8L4.5 12L8 8Z" fill="#e8e8e8"/></svg>
<div class="t" style="left:772px;top:469px;font-size:10px;color:#f0f0f0">Opacity:</div>
<div class="a" style="left:814px;top:464px;width:36px;height:19px;background:#303030"></div>
<div class="t" style="left:818px;top:469px;font-size:10px;color:#f0f0f0">100%</div>
<div class="a" style="left:850px;top:464px;width:17px;height:19px;background:linear-gradient(#6a6a6a,#5a5a5a);border:1px solid #2e2e2e"></div>
<svg class="a" style="left:855px;top:472px" width="7" height="4"><path d="M0 0H7L3.5 4Z" fill="#e8e8e8"/></svg>
<div class="a" style="left:649px;top:488px;width:223px;height:1px;background:#3a3a3a"></div>

<div class="t" style="left:656px;top:498px;font-size:10px;color:#f0f0f0">Lock:</div>
<svg class="a" style="left:689px;top:497px" width="12" height="12"><rect x="0" y="0" width="12" height="12" fill="#c0c0c0"/><path d="M3 0H6V3H3ZM9 0H12V3H9ZM0 3H3V6H0ZM6 3H9V6H6ZM3 6H6V9H3ZM9 6H12V9H9ZM0 9H3V12H0ZM6 9H9V12H6Z" fill="#707070"/></svg>
<svg class="a" style="left:708px;top:493px" width="19" height="16"><path d="M17 1L8 10" stroke="#c8c8c8" stroke-width="2.2"/><path d="M1 15C3 12 4 10 7 9L9 11C8 14 5 15 1 15Z" fill="#c8c8c8"/></svg>
<svg class="a" style="left:731px;top:494px" width="15" height="15"><path d="M7.5 1V14M1 7.5H14" stroke="#c8c8c8" stroke-width="1.5"/><path d="M7.5 0L10 3H5ZM7.5 15L10 12H5ZM0 7.5L3 5V10ZM15 7.5L12 5V10Z" fill="#c8c8c8"/></svg>
<svg class="a" style="left:755px;top:494px" width="12" height="14"><path d="M3 6V4A3 3 0 0 1 9 4V6" fill="none" stroke="#c8c8c8" stroke-width="1.6"/><rect x="1" y="6" width="10" height="8" fill="#c8c8c8"/></svg>
<div class="t" style="left:794px;top:498px;font-size:10px;color:#f0f0f0">Fill:</div>
<div class="a" style="left:814px;top:493px;width:36px;height:18px;background:#303030"></div>
<div class="t" style="left:818px;top:498px;font-size:10px;color:#f0f0f0">100%</div>
<div class="a" style="left:850px;top:493px;width:17px;height:18px;background:linear-gradient(#6a6a6a,#5a5a5a);border:1px solid #2e2e2e"></div>
<svg class="a" style="left:855px;top:500px" width="7" height="4"><path d="M0 0H7L3.5 4Z" fill="#e8e8e8"/></svg>

<!-- layer list -->
<div class="a" style="left:649px;top:516px;width:208px;height:80px;background:#535353;border-top:1px solid #3a3a3a"></div>
<div class="a" style="left:857px;top:516px;width:15px;height:80px;background:#4a4a4a;border-left:1px solid #3a3a3a"></div>
<div class="a" style="left:682px;top:517px;width:36px;height:39px;background:#535c68"></div><div class="a" style="left:718px;top:517px;width:139px;height:39px;background:#58697d"></div>
<div class="a" style="left:681px;top:517px;width:1px;height:79px;background:#3a3a3a"></div>
<div class="a" style="left:650px;top:556px;width:207px;height:1px;background:#3a3a3a"></div>
<div class="a" style="left:650px;top:596px;width:207px;height:1px;background:#3a3a3a"></div>
<svg class="a" style="left:657px;top:530px" width="16" height="14"><path d="M1.8 6.8Q8 -0.8 14.3 6.8Q8 14.4 1.8 6.8Z" fill="#bcbcbc"/><path d="M1.8 6.8Q8 -0.8 14.3 6.8" fill="none" stroke="#333" stroke-width="0.9"/><circle cx="8" cy="6.8" r="2.5" fill="#2e2e2e"/><circle cx="8.8" cy="6" r="0.8" fill="#e8e8e8"/></svg>
<svg class="a" style="left:657px;top:569px" width="16" height="14"><path d="M1.8 6.8Q8 -0.8 14.3 6.8Q8 14.4 1.8 6.8Z" fill="#bcbcbc"/><path d="M1.8 6.8Q8 -0.8 14.3 6.8" fill="none" stroke="#333" stroke-width="0.9"/><circle cx="8" cy="6.8" r="2.5" fill="#2e2e2e"/><circle cx="8.8" cy="6" r="0.8" fill="#e8e8e8"/></svg>
<div class="a" style="left:683px;top:520px;width:34px;height:33px;border:2px solid #151515;background-color:#fff;background-image:linear-gradient(45deg,#c8c8c8 25%,transparent 25%,transparent 75%,#c8c8c8 75%),linear-gradient(45deg,#c8c8c8 25%,transparent 25%,transparent 75%,#c8c8c8 75%);background-size:8px 8px;background-position:4px 0,8px 4px"></div>
<svg class="a" style="left:681px;top:518px" width="38" height="38"><path d="M1 12V1H12M26 1H37V12M37 26V37H26M12 37H1V26" fill="none" stroke="#f4f4f4" stroke-width="1.6"/></svg>
<div class="t" style="left:726px;top:534px;font-size:10px;color:#f0f0f0">Layer 1</div>
<div class="a" style="left:684px;top:560px;width:33px;height:33px;border:1px solid #222;background:#fff"></div>
<div class="t" style="left:727px;top:573px;font-size:10px;font-style:italic;color:#f0f0f0">Background</div>
<svg class="a" style="left:833px;top:569px" width="11" height="13"><path d="M3 6V4A2.5 2.5 0 0 1 8 4V6" fill="none" stroke="#c8c8c8" stroke-width="1.2"/><rect x="1.5" y="6.5" width="8" height="6" fill="none" stroke="#c8c8c8"/><rect x="5" y="8" width="1" height="3" fill="#c8c8c8"/></svg>

<!-- layers footer -->
<div class="a" style="left:649px;top:597px;width:223px;height:12px;background:#4e4e4e"></div>
<div class="a" style="left:649px;top:609px;width:223px;height:1px;background:#363636"></div>
<div class="a" style="left:649px;top:610px;width:223px;height:1px;background:#5e5e5e"></div>
<div class="a" style="left:649px;top:611px;width:223px;height:17px;background:#535353"></div>
<div class="a" style="left:649px;top:628px;width:223px;height:1px;background:#2e2e2e"></div>
<svg class="a" style="left:668px;top:615px" width="16" height="9"><rect x="1" y="1" width="14" height="7" rx="3.5" fill="none" stroke="#a8a8a8" stroke-width="1.6"/><path d="M5 4.5H11" stroke="#a8a8a8" stroke-width="1.6"/></svg>
<div class="t" style="left:697px;top:612px;font-size:15px;font-weight:bold;font-style:italic;font-family:'Liberation Serif',serif;color:#b0b0b0">fx</div>
<svg class="a" style="left:710px;top:623px" width="5" height="4"><path d="M0 0H5L2.5 3Z" fill="#d0d0d0"/></svg>
<svg class="a" style="left:724px;top:615px" width="14" height="10"><rect x="0" y="0" width="14" height="10" fill="#b0b0b0"/><circle cx="7" cy="5" r="2.2" fill="#4a4a4a"/></svg>
<svg class="a" style="left:751px;top:614px" width="17" height="13"><circle cx="6" cy="6" r="5" fill="#6a6a6a" stroke="#b8b8b8" stroke-width="1.5"/><path d="M2.5 9.5L9.5 2.5A5 5 0 0 1 2.5 9.5Z" fill="#b8b8b8"/><path d="M12 10H16L14 12.5Z" fill="#d0d0d0"/></svg>
<svg class="a" style="left:777px;top:613px" width="14" height="12"><path d="M0 1H5L6.5 3H13V11H0Z" fill="#b0b0b0"/></svg>
<svg class="a" style="left:802px;top:614px" width="15" height="13"><path d="M4 1H14V12H4V6H1Z" fill="#b0b0b0"/><path d="M1 6H4V12Z" fill="#6a6a6a"/></svg>
<svg class="a" style="left:831px;top:612px" width="16" height="15"><path d="M1.5 3.5H14.5M5 3V1.2H11V3" fill="none" stroke="#b0b0b0" stroke-width="1.4"/><path d="M3 5H13V14H3Z" fill="#b0b0b0"/><path d="M5.5 6V13M8 6V13M10.5 6V13" stroke="#535353" stroke-width="1"/></svg>
<!--TOOLS-->
<svg class="a" style="left:0;top:0" width="60" height="632">
<rect x="12.5" y="122.5" width="30" height="22" fill="#3a3a3a" stroke="#2e2e2e"/>
<path d="M18 100.5L26 108.5L22 108.5L24.5 112L22.5 113L20 109.5L18 112Z" fill="#bdbdbd"/>
<path d="M31 105.5V114M26.5 109.7H35.5" stroke="#bdbdbd" stroke-width="1.4"/><path d="M31 104.5L33 107H29ZM31 115L33 112.5H29ZM26 109.7L28.5 107.7V111.7ZM36 109.7L33.5 107.7V111.7Z" fill="#bdbdbd"/>
<ellipse cx="27" cy="134" rx="8" ry="7" fill="none" stroke="#bdbdbd" stroke-width="1.4" stroke-dasharray="3.5 2"/>
<path d="M19 154L27 159L33 153L31 165L25 163L22 167Z" fill="none" stroke="#bdbdbd" stroke-width="1.5" stroke-linejoin="round"/>
<circle cx="22.5" cy="185.5" r="4.8" fill="none" stroke="#bdbdbd" stroke-width="1.2" stroke-dasharray="1.3 1.3"/>
<path d="M36 181L29 188" stroke="#bdbdbd" stroke-width="2.5"/><path d="M24 192C25 188 27 187 29 187L30.5 188.5C30 191 27 192 24 192Z" fill="#bdbdbd"/>
<path d="M22 204V215H33M19 207.5H30.5V219" fill="none" stroke="#bdbdbd" stroke-width="2"/><path d="M23 214L33 205" stroke="#bdbdbd" stroke-width="0.8"/>
<path d="M21 244L30 235" stroke="#bdbdbd" stroke-width="3.2" fill="none"/><path d="M22 242.5L29.5 235" stroke="#535353" stroke-width="1.2"/><path d="M28 233L32 237M30.5 234.5L34 231" stroke="#bdbdbd" stroke-width="3.5" stroke-linecap="round"/>
<rect x="10" y="252" width="34" height="1" fill="#3a3a3a"/><rect x="10" y="253" width="34" height="1" fill="#5c5c5c"/>
<path d="M21 263L31 273M33 263L23 273" stroke="#bdbdbd" stroke-width="2.8"/><path d="M18.5 264Q20 259 24 261M35.5 264Q34 259 30 261" fill="none" stroke="#bdbdbd" stroke-width="1.6"/>
<path d="M37 285L27 294" stroke="#bdbdbd" stroke-width="2"/><path d="M18 299C21 295 24 293 27 293L29 295C28 298 24 300 18 299Z" fill="#bdbdbd"/>
<circle cx="27" cy="314" r="3" fill="#bdbdbd"/><rect x="25" y="314" width="4" height="8" fill="#bdbdbd"/><rect x="20" y="322" width="14" height="2.5" fill="#bdbdbd"/><rect x="20" y="326" width="14" height="1.5" fill="#bdbdbd"/>
<path d="M37 338L28 347" stroke="#bdbdbd" stroke-width="2.5"/><path d="M20 351C22 347 25 346 27.5 346L29.5 348C29 351 25 352 20 351Z" fill="#bdbdbd"/><path d="M21 342A6 4 0 0 1 31 340" fill="none" stroke="#bdbdbd" stroke-width="1.5"/><path d="M20 340L22 344L24 340Z" fill="#bdbdbd"/>
<path d="M19 372L25 364H37L31 372Z" fill="#9a9a9a"/><path d="M19 372H31V377H19Z" fill="#bdbdbd"/><path d="M31 372L37 364V369L31 377Z" fill="#8a8a8a"/>
<defs><linearGradient id="gr" x1="0" x2="1" y1="0" y2="0.3"><stop offset="0" stop-color="#454545"/><stop offset="1" stop-color="#c8c8c8"/></linearGradient></defs>
<rect x="19.5" y="391.5" width="16" height="11" fill="url(#gr)" stroke="#bdbdbd"/>
<path d="M26 416C22 421 20 424 20 426A6 5 0 0 0 32 426C32 424 30 421 26 416Z" fill="#bdbdbd"/>
<circle cx="25" cy="446.5" r="4.8" fill="#bdbdbd"/><path d="M28 450L34 456" stroke="#bdbdbd" stroke-width="2.2"/>
<rect x="10" y="463" width="34" height="1" fill="#3a3a3a"/><rect x="10" y="464" width="34" height="1" fill="#5c5c5c"/>
<path d="M19 486L22 477L29 473L33 477L29 484Z" fill="#bdbdbd"/><path d="M19 486L25 480" stroke="#535353" stroke-width="1"/><path d="M29 472L32 469L36 473L33 476Z" fill="#bdbdbd"/>
<path d="M20 497H32V501H31L30 499H27.3V508.5H29V510H23V508.5H24.7V499H22L21 501H20Z" fill="#bdbdbd"/>
<path d="M21.5 520.5V536L25 532.5L27.5 537L30 536L27.5 531.5H32Z" fill="#262626" stroke="#bdbdbd" stroke-width="1.2"/>
<rect x="20.5" y="549.5" width="13" height="12" fill="#8a8a8a" stroke="#bdbdbd"/>
<rect x="10" y="570" width="34" height="1" fill="#3a3a3a"/><rect x="10" y="571" width="34" height="1" fill="#5c5c5c"/>
<path d="M23 587V579.5M26 586V577M29 586V577.5M32 587V580" stroke="#bdbdbd" stroke-width="2.3" stroke-linecap="round"/><path d="M21.8 585H33.2V589C33.2 591.5 31.5 593.5 29 593.5H26C24 593.5 23 592.5 21.5 590.5L18.5 586.5L19.8 585.2L22.5 587.5Z" fill="#bdbdbd"/>
<circle cx="25" cy="608" r="5" fill="#a8a8a8" stroke="#bdbdbd" stroke-width="1.6"/><path d="M28.5 611.5L34 618" stroke="#bdbdbd" stroke-width="2.6" stroke-linecap="round"/>
<rect x="10" y="624" width="34" height="1" fill="#464646"/><rect x="10" y="625" width="34" height="1" fill="#5c5c5c"/>
<path d="M12.5 633V627.5H19.5V633" fill="none" stroke="#bdbdbd" stroke-width="1.3"/><path d="M30 628.5H37" stroke="#bdbdbd" stroke-width="1.3"/><path d="M29 628.5L31.5 626.5V630.5Z" fill="#bdbdbd"/>
<path d="M39 140V143H36Z" fill="#e0e0e0"/>
<path d="M39 165V168H36Z" fill="#e0e0e0"/>
<path d="M39 192V195H36Z" fill="#e0e0e0"/>
<path d="M39 219V222H36Z" fill="#e0e0e0"/>
<path d="M39 245V248H36Z" fill="#e0e0e0"/>
<path d="M39 274V277H36Z" fill="#e0e0e0"/>
<path d="M39 300V303H36Z" fill="#e0e0e0"/>
<path d="M39 325V328H36Z" fill="#e0e0e0"/>
<path d="M39 352V355H36Z" fill="#e0e0e0"/>
<path d="M39 377V380H36Z" fill="#e0e0e0"/>
<path d="M39 403V406H36Z" fill="#e0e0e0"/>
<path d="M39 429V432H36Z" fill="#e0e0e0"/>
<path d="M39 455V458H36Z" fill="#e0e0e0"/>
<path d="M39 485V488H36Z" fill="#e0e0e0"/>
<path d="M39 511V514H36Z" fill="#e0e0e0"/>
<path d="M39 537V540H36Z" fill="#e0e0e0"/>
<path d="M39 563V566H36Z" fill="#e0e0e0"/>
<path d="M39 594V597H36Z" fill="#e0e0e0"/>
</svg>
<!--/TOOLS-->
<!--DOCK-->
<svg class="a" style="left:608px;top:80px" width="41" height="140">
<path d="M16.8 25H24.4V32.7H16.8Z" fill="#bdbdbd"/>
<path d="M18.5 25L15.5 20M20.5 25V17M22.5 25L25.5 20" stroke="#bdbdbd" stroke-width="1.2"/>
<ellipse cx="15.5" cy="19.5" rx="2" ry="3.2" transform="rotate(-25 15.5 19.5)" fill="#bdbdbd"/><ellipse cx="20.5" cy="17" rx="1.6" ry="3" fill="#bdbdbd"/><ellipse cx="25.5" cy="19.5" rx="2.2" ry="2.6" transform="rotate(40 25.5 19.5)" fill="#bdbdbd"/>
<path d="M11.5 46.2C13 43.5 18 43.5 21 45.5L30.5 45.8V47L21 47.2C18 49 13 49 11.5 46.2Z" fill="#bdbdbd"/>
<path d="M12 55H23" stroke="#bdbdbd" stroke-width="1.5"/><path d="M23 55C24.5 52 28 50.5 30.5 51C31.5 54 30.5 58 27 60C25 59 24 57 23 55Z" fill="#bdbdbd"/>
<path d="M21 84H29M24.8 84V97.3M27.8 84V97.3" fill="none" stroke="#bdbdbd" stroke-width="1.6"/><path d="M24.8 83.5A3.4 3.4 0 0 0 24.8 90.5Z" fill="#bdbdbd"/>
<rect x="13.5" y="92.5" width="5.5" height="5.5" fill="none" stroke="#bdbdbd" stroke-width="1.3"/><rect x="16.5" y="95.5" width="5.5" height="5.5" fill="#535353" stroke="#bdbdbd" stroke-width="1.3"/>
<path d="M21.3 123.4L25.5 111.8L29.7 123.4M22.8 119.5H28.2" fill="none" stroke="#bdbdbd" stroke-width="1.8"/>
<rect x="13.5" y="119.5" width="5.5" height="5.5" fill="none" stroke="#bdbdbd" stroke-width="1.3"/><rect x="16.5" y="122.5" width="5.5" height="5.5" fill="#535353" stroke="#bdbdbd" stroke-width="1.3"/>
</svg>
<!--/DOCK-->
<!--ARROWS-->
<svg class="a" style="left:0;top:0" width="876" height="632">
<path d="M142.5 559.5L222 461" stroke="#ec3c44" stroke-width="2.6" stroke-linecap="round"/>
<path d="M228.5 452L209 462.5L217.5 464.5L221.5 472Z" fill="#ec3c44"/>
<path d="M502 583.5L625 548" stroke="#ec3c44" stroke-width="2.6" stroke-linecap="round"/>
<path d="M638.5 543L615 541L620 548.5L621 557Z" fill="#ec3c44"/>
</svg>
<!--/ARROWS-->
</body></html>
